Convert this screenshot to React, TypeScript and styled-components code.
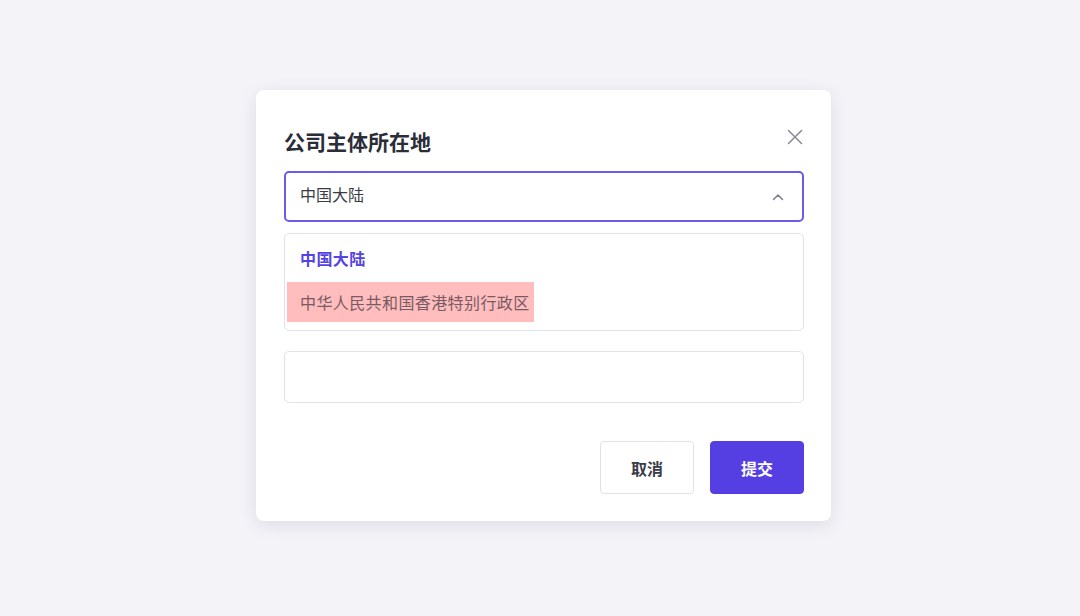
import React from "react";
import styled, { createGlobalStyle } from "styled-components";

const Global = createGlobalStyle`
  html, body { margin: 0; padding: 0; background: #f3f3f8; }
  body { font-family: "Inter", "Noto Sans CJK SC", sans-serif; }
  * { box-sizing: border-box; }
`;

const Page = styled.div`
  width: 1080px;
  height: 616px;
  display: flex;
  align-items: center;
  justify-content: center;
  padding: 0 0 5px 7px;
  background: #f3f3f8;
`;

const Modal = styled.div`
  width: 575px;
  height: 431px;
  background: #ffffff;
  border-radius: 8px;
  box-shadow: 0 4px 18px rgba(30, 30, 60, 0.1);
  padding: 28px 27px 27px 28px;
  display: flex;
  flex-direction: column;
`;

const Header = styled.div`
  display: flex;
  align-items: flex-start;
  justify-content: space-between;
  height: 48px;
  margin-bottom: 5px;
`;

const Title = styled.h2`
  margin: 0;
  font-family: "Noto Sans CJK SC", sans-serif;
  font-size: 21px;
  line-height: 46px;
  font-weight: 700;
  color: #2b2d38;
`;

const CloseButton = styled.button`
  width: 38px;
  height: 38px;
  margin-right: -10px;
  border: none;
  background: transparent;
  padding: 0;
  display: flex;
  align-items: center;
  justify-content: center;
  cursor: pointer;
`;

const Select = styled.div`
  height: 51px;
  border: 2px solid #6c5be8;
  border-radius: 5px;
  display: flex;
  align-items: center;
  justify-content: space-between;
  padding: 0 18px 5px 14px;
  font-family: "Noto Sans CJK SC", sans-serif;
  font-size: 16px;
  color: #3a3b45;
`;

const Chevron = styled.svg`
  margin-top: 5px;
`;

const List = styled.div`
  margin-top: 11px;
  height: 98px;
  border: 1px solid #dfe2ee;
  border-radius: 5px;
  padding: 6px 2px;
  display: flex;
  flex-direction: column;
  align-items: flex-start;
  gap: 2px;
`;

const Option = styled.div<{ $selected?: boolean; $hover?: boolean }>`
  height: 40px;
  display: flex;
  align-items: center;
  padding: 0 4px ${(p) => (p.$selected ? "4px" : "0")} 13px;
  font-family: "Noto Sans CJK SC", sans-serif;
  font-size: 16px;
  letter-spacing: 0.4px;
  font-weight: ${(p) => (p.$selected ? 700 : 400)};
  color: ${(p) => (p.$selected ? "#5544e2" : p.$hover ? "#7a5a64" : "#3a3b45")};
  background: ${(p) => (p.$hover ? "#ffbdbe" : "transparent")};
`;

const Input = styled.div`
  margin-top: 20px;
  height: 52px;
  border: 1px solid #dfe2ee;
  border-radius: 5px;
`;

const Footer = styled.div`
  margin-top: 38px;
  display: flex;
  justify-content: flex-end;
  gap: 16px;
`;

const Button = styled.button<{ $primary?: boolean }>`
  width: 94px;
  height: 53px;
  border-radius: 4px;
  border: 1px solid ${(p) => (p.$primary ? "#553fe3" : "#dfe2ee")};
  background: ${(p) => (p.$primary ? "#553fe3" : "#ffffff")};
  color: ${(p) => (p.$primary ? "#ffffff" : "#3a3b48")};
  font-family: "Noto Sans CJK SC", sans-serif;
  font-size: 16px;
  font-weight: 700;
  cursor: pointer;
`;

export default function App() {
  return (
    <>
      <Global />
      <Page>
        <Modal>
          <Header>
            <Title>公司主体所在地</Title>
            <CloseButton aria-label="关闭">
              <svg width="16" height="16" viewBox="0 0 16 16">
                <path d="M1.5 1.5 L14.5 14.5 M14.5 1.5 L1.5 14.5" stroke="#8a8d99" strokeWidth="1.6" strokeLinecap="round" />
              </svg>
            </CloseButton>
          </Header>
          <Select>
            <span>中国大陆</span>
            <Chevron width="12" height="8" viewBox="0 0 12 8">
              <path d="M1.5 6.5 L6 2 L10.5 6.5" stroke="#7d808c" strokeWidth="1.5" fill="none" strokeLinecap="round" strokeLinejoin="round" />
            </Chevron>
          </Select>
          <List>
            <Option $selected>中国大陆</Option>
            <Option $hover>中华人民共和国香港特别行政区</Option>
          </List>
          <Input />
          <Footer>
            <Button>取消</Button>
            <Button $primary>提交</Button>
          </Footer>
        </Modal>
      </Page>
    </>
  );
}
